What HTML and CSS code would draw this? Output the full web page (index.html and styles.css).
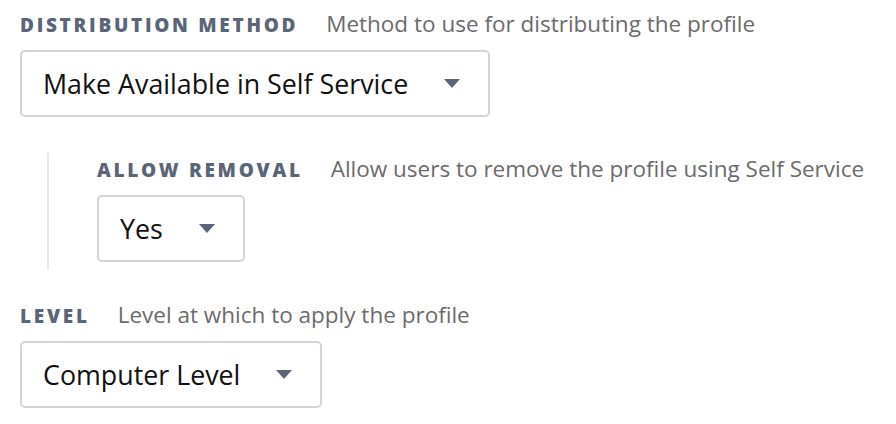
FILE: index.html
```html
<!DOCTYPE html>
<html lang="en">
<head>
    <meta charset="UTF-8">
    <meta name="viewport" content="width=device-width, initial-scale=1.0">
    <title>Profile Scope</title>
    <link rel="stylesheet" href="styles.css">
</head>
<body>
    <div class="field">
        <div class="field-head">
            <span class="field-label">Distribution Method</span>
            <span class="field-desc">Method to use for distributing the profile</span>
        </div>
        <div class="select">
            <span class="select-value">Make Available in Self Service</span>
            <span class="caret"></span>
        </div>
    </div>

    <div class="sub-fields">
        <div class="field">
            <div class="field-head">
                <span class="field-label">Allow Removal</span>
                <span class="field-desc">Allow users to remove the profile using Self Service</span>
            </div>
            <div class="select">
                <span class="select-value">Yes</span>
                <span class="caret"></span>
            </div>
        </div>
    </div>

    <div class="field">
        <div class="field-head">
            <span class="field-label">Level</span>
            <span class="field-desc">Level at which to apply the profile</span>
        </div>
        <div class="select">
            <span class="select-value">Computer Level</span>
            <span class="caret"></span>
        </div>
    </div>
</body>
</html>
```

FILE: styles.css
```css
body {
    font-family: "Open Sans", Lato, sans-serif;
    margin: 0;
    padding: 12px 20px 0;
    background-color: #fff;
    color: #111;
}
.field {
    display: flex;
    flex-direction: column;
    align-items: flex-start;
}
.field-head {
    display: flex;
    align-items: baseline;
    gap: 28px;
    height: 24px;
    margin-bottom: 14px;
}
.field-label {
    font-size: 19px;
    line-height: 24px;
    font-weight: 800;
    letter-spacing: 2.7px;
    text-transform: uppercase;
    color: #5a6577;
}
.field-desc {
    font-size: 22.5px;
    line-height: 24px;
    color: #6b6b6b;
}
.select {
    display: flex;
    align-items: center;
    height: 67px;
    box-sizing: border-box;
    padding: 0 28px 0 21px;
    border: 2px solid #d2d4d9;
    border-radius: 5px;
    background-color: #fff;
}
.select-value {
    font-size: 26.8px;
    color: #111;
}
.caret {
    width: 0;
    height: 0;
    margin-left: 36px;
    border-left: 8px solid transparent;
    border-right: 8px solid transparent;
    border-top: 9px solid #5a6577;
}
.sub-fields {
    margin: 36px 0 33px 27px;
    padding: 4px 0 8px 48px;
    border-left: 2px solid #e8e8e8;
}
```
